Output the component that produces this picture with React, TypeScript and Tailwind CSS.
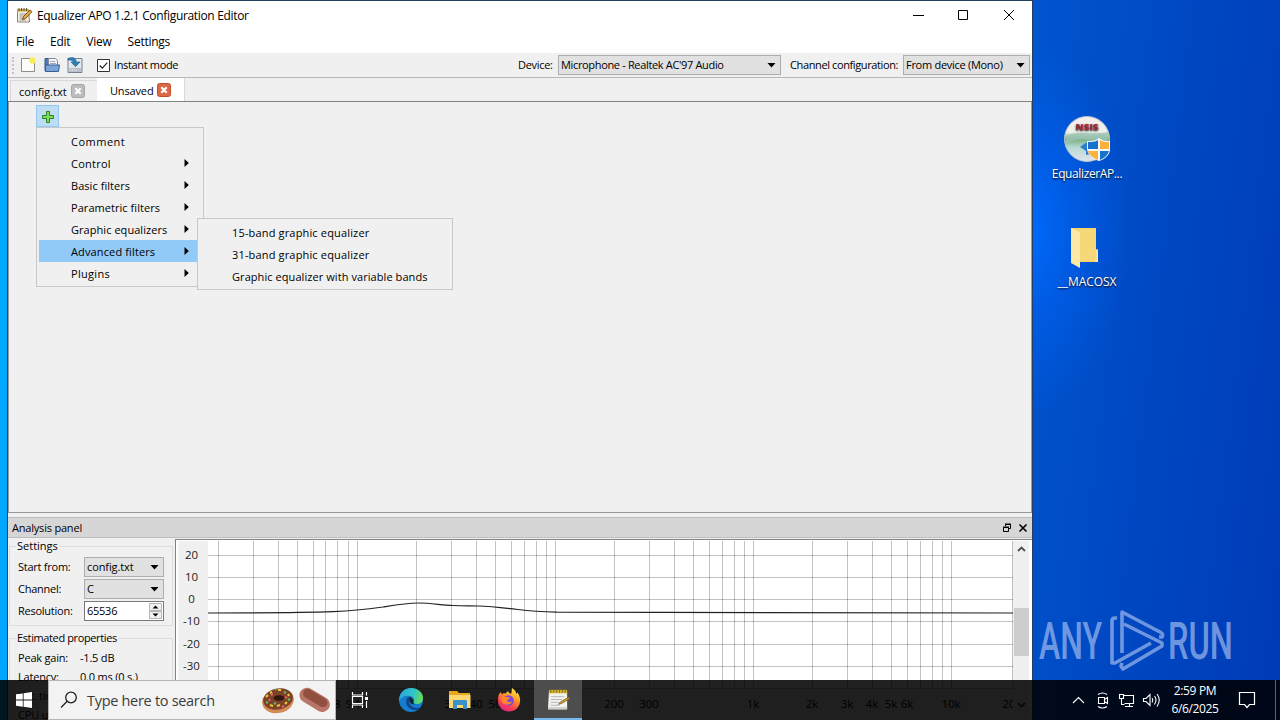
import type { ReactNode } from 'react'
import clsx from 'clsx'

const MENU_ITEMS = [
    { label: 'Comment', sub: false, track: 'tracking-[0.5px]' },
    { label: 'Control', sub: true, track: 'tracking-[0.25px]' },
    { label: 'Basic filters', sub: true, track: 'tracking-[0.05px]' },
    { label: 'Parametric filters', sub: true, track: 'tracking-[0.05px]' },
    { label: 'Graphic equalizers', sub: true, track: 'tracking-[0.05px]' },
    { label: 'Advanced filters', sub: true, track: 'tracking-[0.13px]' },
    { label: 'Plugins', sub: true, track: 'tracking-[0.3px]' },
]

const SUBMENU_ITEMS = [
    { label: '15-band graphic equalizer', track: 'tracking-[0.16px]' },
    { label: '31-band graphic equalizer', track: 'tracking-[0.16px]' },
    { label: 'Graphic equalizer with variable bands', track: 'tracking-[0.07px]' },
]

// Grid lines and labels use desktop coordinates; the svg viewBox does the shift
const GRID_X = [
    218, 253, 278, 297, 313, 325, 337, 348, 357,
    416, 451, 476, 495, 511, 524, 536, 546, 555,
    614, 649, 674, 693, 709, 722, 734, 744, 753,
    812, 847, 872, 891, 907, 920, 932, 942, 951, 1012,
]
const GRID_Y = [555, 577, 599, 621, 644, 666, 688]
const GAIN_LABELS = ['20', '10', '0', '-10', '-20', '-30']
const FREQ_LABELS: [number, string][] = [
    [337, '8'], [349, '9'], [361, '10'], [416, '20'], [451, '30'], [476, '40'], [495, '50'],
    [614, '200'], [649, '300'], [753, '1k'], [812, '2k'], [847, '3k'],
    [872, '4k'], [891, '5k'], [907, '6k'], [951, '10k'], [1012, '20k'],
]

function Triangle({ className }: { className?: string }) {
    return (
        <svg className={clsx('shrink-0', className)} width="9" height="5" viewBox="0 0 9 5">
            <path d="M0.5 0h8L4.5 4.6z" fill="#000" />
        </svg>
    )
}

function Combo({ className, children }: { className?: string; children: ReactNode }) {
    return (
        <div className={clsx('flex h-5 shrink-0 items-center justify-between border border-[#adadad] bg-[#e1e1e1] pl-[2px] pr-1', className)}>
            <span className="whitespace-nowrap pt-px">{children}</span>
            <Triangle />
        </div>
    )
}

function TabClose({ active }: { active?: boolean }) {
    return (
        <svg width="14" height="14" viewBox="0 0 14 14" className="shrink-0">
            <rect x="0.5" y="0.5" width="13" height="13" rx="2" fill={active ? '#dc6747' : '#bcbcbc'} stroke={active ? '#c2502f' : '#a5a5a5'} />
            <path d="M4.3 4.3l5.4 5.4M9.7 4.3L4.3 9.7" stroke="#fff" strokeWidth="2.2" />
        </svg>
    )
}

function NotepadIcon({ size }: { size: number }) {
    return (
        <svg width={size} height={size} viewBox="0 0 24 24" className="shrink-0">
            <path d="M2 4h19v18H1z" fill="#f3f1ec" />
            <path d="M1 20h20v2.6H1z" fill="#d0cdc6" />
            <path d="M2 2h19v3.5H2z" fill="#d9b52c" />
            <path d="M4 1v4M7 1v4M10 1v4M13 1v4M16 1v4M19 1v4" stroke="#7a6a22" strokeWidth="1" />
            <path d="M4 9h14M4 12h12M4 15h8M4 18h9" stroke="#b3b8c0" strokeWidth="1" />
            <path d="M12 17l2-2.500 9-5 1 1.300-8.500 5.200z" fill="#e0a534" stroke="#705018" strokeWidth="0.8" />
        </svg>
    )
}

function TitleBar() {
    return (
        <div className="flex h-[29px] shrink-0 items-center bg-white pl-2 pr-[17px] text-[12px]">
            <svg width="17" height="17" viewBox="0 0 17 17" className="shrink-0">
                <path d="M1.500 3.500h11l1 11.500H1.500z" fill="#f4eedd" stroke="#8d8678" />
                <path d="M1 2h12v2.500H1z" fill="#caa64a" />
                <path d="M3 1v3M5.500 1v3M8 1v3M10.500 1v3" stroke="#635433" />
                <path d="M3.500 7h7M3.500 9h6M3.500 11h4M3.500 13h6" stroke="#9b9a96" />
                <path d="M6.500 12.500l1-3L14 3l2 1.700-6.500 6.800z" fill="#e7aa48" stroke="#694516" strokeWidth="0.9" />
            </svg>
            <span className="ml-1 flex-1 tracking-[-0.33px]">Equalizer APO 1.2.1 Configuration Editor</span>
            <svg width="103" height="12" viewBox="0 0 103 12" fill="none" stroke="#000" strokeWidth="1" className="-mt-px">
                <path d="M1 6.500h11M46.500 1.500h9v9h-9zM92 1l10 10M102 1L92 11" />
            </svg>
        </div>
    )
}

function Toolbar() {
    return (
        <div className="flex h-[25px] shrink-0 items-center border-b border-[#b8b8b8] bg-[#f0f0f0] pl-1 pr-[2px]">
            <div className="mr-[6px] h-[17px] w-0 border-l-2 border-dotted border-[#c3c3c3]" />
            <svg width="16" height="16" viewBox="0 0 16 16" className="mr-2 shrink-0">
                <path d="M1.500 1.500h13v13h-13z" fill="#fcfcfa" stroke="#8e8e86" />
                <circle cx="12.500" cy="3.500" r="3.300" fill="#f8ed5a" />
            </svg>
            <svg width="16" height="16" viewBox="0 0 16 16" className="mr-[7px] shrink-0">
                <path d="M1 3V1.500h5l1 1.500v11H1z" fill="#537db2" stroke="#365a8b" />
                <path d="M4.500 1.500h7l2 2V9h-9z" fill="#f0f3f7" stroke="#7c8896" />
                <path d="M6 4.500h5M6 6.500h6" stroke="#a1aab5" />
                <path d="M1.500 8h14l-1 6.500h-13z" fill="#7aa5d8" stroke="#365f96" />
            </svg>
            <svg width="16" height="16" viewBox="0 0 16 16" className="shrink-0">
                <path d="M1 1.500h14v14H1z" fill="#e3e8ec" stroke="#75828f" />
                <path d="M2 11h12v4H2z" fill="#b9c2cb" />
                <path d="M3 13h8" stroke="#eef2f5" strokeDasharray="1 1" />
                <path d="M1 1.500c5-2 8-.5 8.300 3.500H13l-4.500 4.700L4 5h2.400C6.200 3.500 4 2.800 1 3z" fill="#2f7fb5" stroke="#1d5f90" strokeWidth="0.6" />
            </svg>
            <svg width="13" height="13" viewBox="0 0 13 13" className="ml-[14px] shrink-0">
                <path d="M.5.5h12v12H.5z" fill="#fff" stroke="#333" />
                <path d="M2.700 6.500l2.600 2.700 5-5.500" fill="none" stroke="#222" strokeWidth="1.200" />
            </svg>
            <span className="ml-1 flex-1 tracking-[-0.35px]">Instant mode</span>
            <span className="w-[40px] pt-px tracking-[-0.3px]">Device:</span>
            <Combo className="w-[223px] tracking-[-0.34px]">Microphone - Realtek AC'97 Audio</Combo>
            <span className="ml-[9px] w-[113px] whitespace-nowrap pt-px tracking-[-0.38px]">Channel configuration:</span>
            <Combo className="w-[127px] tracking-[-0.28px]">From device (Mono)</Combo>
        </div>
    )
}

function Tabs() {
    return (
        <div className="flex h-6 shrink-0 items-end border-b border-[#828282] bg-[#f0f0f0] pl-[2px]">
            <div className="flex h-[21px] w-[87px] items-center border-l border-t border-[#d9d9d9] pl-2">
                <span className="w-[52px] pt-[3px]">config.txt</span>
                <TabClose />
            </div>
            <div className="flex h-[23px] w-[88px] items-center border-r border-[#d9d9d9] bg-white pl-[13px]">
                <span className="w-[47px] pt-[3px] tracking-[-0.15px]">Unsaved</span>
                <TabClose active />
            </div>
        </div>
    )
}

function FilterMenu() {
    return (
        <div className="absolute left-[36px] top-[127px] w-[168px] border border-[#c8c8c8] bg-[#f0f0f0] p-[2px]">
            {MENU_ITEMS.map(item => (
                <div
                    key={item.label}
                    className={clsx(
                        'flex h-[22px] items-center justify-between pl-8 pr-[12px] pt-[3px]',
                        item.track,
                        item.label === 'Advanced filters' && 'bg-[#91c9f7]',
                    )}
                >
                    {item.label}
                    {item.sub && (
                        <svg width="5" height="8" viewBox="0 0 5 8" className="-mt-[3px]">
                            <path d="M0.500 0v8l4.300-4z" />
                        </svg>
                    )}
                </div>
            ))}
        </div>
    )
}

function FilterSubmenu() {
    return (
        <div className="absolute left-[197px] top-[218px] w-[256px] border border-[#c8c8c8] bg-[#f0f0f0] p-[2px]">
            {SUBMENU_ITEMS.map(item => (
                <div key={item.label} className={clsx('flex h-[22px] items-center pl-8 pt-[3px]', item.track)}>{item.label}</div>
            ))}
        </div>
    )
}

function AnalysisSettings() {
    return (
        <div className="-mt-px flex w-[167px] shrink-0 flex-col pl-px pr-[2px]">
            <fieldset className="h-[88px] border border-[#dcdcdc] pl-[8px]">
                <legend className="-ml-[2px] h-4 px-px leading-4">Settings</legend>
                <div className="mt-[3px] flex flex-col gap-[2px] tracking-[-0.25px]">
                    <div className="flex items-center"><span className="w-[66px] pt-px">Start from:</span><Combo className="w-20 tracking-[-0.1px]">config.txt</Combo></div>
                    <div className="flex items-center"><span className="w-[66px] pt-px">Channel:</span><Combo className="w-20">C</Combo></div>
                    <div className="flex items-center">
                        <span className="w-[66px] pt-px">Resolution:</span>
                        <div className="flex h-5 w-20 items-center justify-between border border-[#7a7a7a] bg-white pl-[2px] pr-px">
                            <span className="pt-px">65536</span>
                            <svg width="13" height="16" viewBox="0 0 13 16">
                                <path d="M.5.5h12v7H.5zM.5 8.500h12v7H.5z" fill="#f0f0f0" stroke="#b5b5b5" />
                                <path d="M3.500 5.500h6l-3-3zM3.500 10.500h6l-3 3z" />
                            </svg>
                        </div>
                    </div>
                </div>
            </fieldset>
            <fieldset className="mt-[4px] h-[110px] border border-[#dcdcdc] pl-[8px]">
                <legend className="-ml-[2px] h-4 px-px leading-4 tracking-[-0.38px]">Estimated properties</legend>
                <div className="mt-[2px] grid grid-cols-[62px_1fr] leading-[19px] tracking-[-0.2px]">
                    <span>Peak gain:</span><span>-1.5 dB</span>
                    <span>Latency:</span><span>0.0 ms (0 s.)</span>
                    <span>Init. time:</span><span>0.1 ms</span>
                    <span>CPU usage:</span><span>0.0 %</span>
                </div>
            </fieldset>
        </div>
    )
}

function ResponseGraph() {
    return (
        <div className="flex flex-1 border border-r-0 border-[#828282] bg-white pl-[2px] pt-px">
            <svg width="835" height="180" viewBox="178 541 835 180" className="shrink-0">
                <path d="M178 541h30v180h-30zM208 689h806v32H208z" fill="#f0f0f0" />
                <g fill="none" stroke="#000" strokeOpacity="0.24" shapeRendering="crispEdges">
                    {GRID_X.map(x => <path key={x} d={`M${x + 0.5} 540V689`} />)}
                    {GRID_Y.map(y => <path key={y} d={`M208 ${y + 0.5}H1014`} />)}
                </g>
                <path
                    d="M208 613C250 613 300 612.800 333 611.700C345 611.300 350 610.800 357 610C367 609 376 607.900 383 607C395 605 406 603 418 603C432 603 440 605 453 605.500C463 606 468 605.800 478 606C492 606.500 505 608 518 609.500C530 611 542 611.800 557 612.200C590 612.900 650 613 1014 613"
                    fill="none"
                    stroke="#222"
                    strokeWidth="1.200"
                />
                <g fontSize="11.500" fill="#222" textAnchor="middle">
                    {GAIN_LABELS.map((label, i) => <text key={label} x="191.500" y={GRID_Y[i] + 4}>{label}</text>)}
                    {FREQ_LABELS.map(([x, label]) => <text key={x} x={x} y="708" fill="#000">{label}</text>)}
                </g>
            </svg>
            <div className="flex w-4 shrink-0 flex-col items-center bg-[#f0f0f0]">
                <svg width="9" height="6" viewBox="0 0 9 6" className="mt-[5px]">
                    <path d="M1 5l3.500-3.500L8 5" fill="none" stroke="#505050" strokeWidth="1.800" />
                </svg>
                <div className="mt-[56px] h-12 w-[15px] bg-[#cdcdcd]" />
                <svg width="9" height="6" viewBox="0 0 9 6" className="mt-[46px]">
                    <path d="M1 1l3.500 3.500L8 1" fill="none" stroke="#333" strokeWidth="1.800" />
                </svg>
            </div>
        </div>
    )
}

function EditorWindow() {
    return (
        <div className="absolute left-[7px] top-0 flex h-[730px] w-[1026px] flex-col border border-[#24405f] bg-[#f0f0f0]">
            <TitleBar />
            <div className="flex h-[23px] shrink-0 items-center gap-[16px] bg-white pl-2 pt-px text-[12px] tracking-[-0.25px]">
                <span>File</span><span>Edit</span><span>View</span><span>Settings</span>
            </div>
            <Toolbar />
            <Tabs />
            <div className="h-[411px] shrink-0 border border-t-0 border-[#9a9a9a] pl-[27px] pt-[3px]">
                <div className="flex h-[22px] w-[23px] items-center justify-center border border-[#90c8f6] bg-[#c0dcf3] pt-px">
                    <svg width="13" height="13" viewBox="0 0 13 13">
                        <path d="M5.500 1.500h3v4h4v3h-4v4h-3v-4h-4v-3h4z" fill="#7fdc55" stroke="#27832b" />
                    </svg>
                </div>
            </div>
            <div className="mt-1 flex h-[21px] shrink-0 items-center border-y border-[#bdbdbd] bg-[#d6d6d6] pl-1 pr-[4px]">
                <span className="flex-1 pt-[2px] tracking-[-0.2px]">Analysis panel</span>
                <svg width="26" height="10" viewBox="0 0 26 10" fill="none" stroke="#000">
                    <path d="M3.500 3V1.500h5v4H7M1.500 4.500h5v4h-5zM1 4h6M3 1h6" />
                    <path d="M17.500 1.500l7 7M24.500 1.500l-7 7" strokeWidth="1.600" />
                </svg>
            </div>
            <div className="mt-px flex flex-1">
                <AnalysisSettings />
                <ResponseGraph />
            </div>
        </div>
    )
}

function DesktopIcons() {
    return (
        <div className="absolute left-[1047px] top-[114px] flex w-[80px] flex-col items-center text-[12px] leading-4 text-white [text-shadow:0_1px_2px_#000]">
            <svg width="48" height="48" viewBox="0 0 48 48">
                <defs>
                    <linearGradient id="disc" x1="0" y1="0" x2="0" y2="1">
                        <stop offset="0" stopColor="#f5eeee" />
                        <stop offset="0.35" stopColor="#eef0ea" />
                        <stop offset="0.5" stopColor="#76ad7c" />
                        <stop offset="0.68" stopColor="#b5d8d2" />
                        <stop offset="1" stopColor="#e2e5ec" />
                    </linearGradient>
                </defs>
                <circle cx="24" cy="25" r="22.500" fill="url(#disc)" stroke="#b7c4cc" />
                <path d="M3 22c12-7 22 0 42-4v8C30 30 20 20 3 30z" fill="#9cc3b4" opacity="0.8" />
                <text x="24" y="16" fontSize="9" fontWeight="900" fill="#a52b38" textAnchor="middle" textLength="23" lengthAdjust="spacingAndGlyphs">NSIS</text>
                <path d="M17 33l7-5 4 2v10l-5 1v-4z" fill="#2b7ed0" />
                <path d="M36 24c-4 3-7 3-12 3v8c1 6 6 10 12 12 6-2 11-6 11-12v-8c-5 0-7 0-11-3z" fill="#f5f8fb" />
                <path d="M35 26c-3 2-6 2-10 2v7h10z" fill="#1872c9" />
                <path d="M37 26c3 2 6 2 9 2v7h-9zM35 37v9c-5-2-9-5-10-9z" fill="#fcb13c" />
                <path d="M37 37v9c5-2 8-5 9-9z" fill="#1872c9" />
            </svg>
            <span className="mt-[4px] tracking-[-0.38px]">EqualizerAP...</span>
            <svg width="48" height="48" viewBox="0 0 48 48" className="mt-[42px]">
                <path d="M8 4h25v21l2 2v11H17z" fill="#f5d26d" />
                <path d="M17 5h16v32H17z" fill="#f7d879" />
                <path d="M8 4l9 4v36l-9-5z" fill="#fde9a4" />
                <path d="M33 27c1-3 2-2 2 0v11h-3z" fill="#ffe591" />
            </svg>
            <span className="mt-[2px] tracking-[-0.05px]">__MACOSX</span>
        </div>
    )
}

function Watermark() {
    return (
        <svg className="absolute left-[1036px] top-[606px] opacity-60" width="200" height="70" viewBox="1036 606 200 70">
            <g fontFamily="Roboto" fontWeight="500" fontSize="52" fill="#b8ccf5">
                <text x="1039" y="659" textLength="63" lengthAdjust="spacingAndGlyphs">ANY</text>
                <text x="1168" y="659" textLength="65" lengthAdjust="spacingAndGlyphs">RUN</text>
            </g>
            <g fill="none" stroke="#b8ccf5" strokeWidth="3.600" strokeLinejoin="round">
                <path d="M1117 618h-2q-3 0-3 3v42h3l36-20" />
                <path d="M1122 653v-41l38 20q4 2 2 5l-3 0" />
                <path d="M1124 624l38 19v3l-39 23-2-3 1-3" />
            </g>
        </svg>
    )
}

function SearchBox() {
    return (
        <div className="flex h-10 w-[288px] shrink-0 items-center border border-[#b6b6b6] bg-[#f3f3f3] pl-[11px] text-[14.5px] text-[#3c3c3c]">
            <svg width="18" height="18" viewBox="0 0 18 18" fill="none" stroke="#222" strokeWidth="1.300">
                <circle cx="11" cy="6.500" r="5.300" /><path d="M7.200 10.300L1 16.500" />
            </svg>
            <span className="ml-[9px] flex-1 pt-[2px] tracking-[-0.3px]">Type here to search</span>
            <svg width="70" height="30" viewBox="0 0 70 30" className="mr-[4px]">
                <ellipse cx="17" cy="16" rx="16" ry="12" fill="#d48a55" transform="rotate(-12 17 16)" />
                <ellipse cx="17" cy="14" rx="15" ry="10.500" fill="#7b4129" transform="rotate(-12 17 14)" />
                <ellipse cx="18" cy="13" rx="5.500" ry="2.800" fill="#32170f" />
                <path d="M5 12l2-2M9 20l3 1M16 21l3-1M24 19l2-2M28 11l-1-2M20 5l-3 0M11 7l-2 1" stroke="#eec83b" strokeWidth="2" />
                <path d="M5 17l2 1M13 18l2 1M23 7l2 1M27 15l2-1M14 5l1-1" stroke="#61bd65" strokeWidth="2" />
                <path d="M8 14l1 2M21 22l2-1M24 13l2-1M10 10l2-1" stroke="#e5655b" strokeWidth="2" />
                <rect x="37" y="7" width="33" height="15" rx="7.500" fill="#b97565" transform="rotate(31 53 15)" />
                <rect x="40" y="8" width="27" height="9" rx="4.500" fill="#91503f" transform="rotate(31 53 14)" />
            </svg>
        </div>
    )
}

function Taskbar() {
    return (
        <div className="absolute inset-x-0 bottom-0 flex h-10 items-center bg-black/87 text-white">
            <svg width="48" height="40" viewBox="0 0 48 40" className="shrink-0">
                <path d="M16 14.300l6.800-.9v6.200H16zM23.600 13.300L32 12v7.600h-8.400zM16 20.400h6.800v6.300l-6.800-.9zM23.600 20.400H32V28l-8.400-1.200z" fill="#fff" />
            </svg>
            <SearchBox />
            <svg width="18" height="18" viewBox="0 0 18 18" className="ml-[15px] shrink-0" fill="none" stroke="#fff" strokeWidth="1.200">
                <path d="M1.500 1v3h10V1M1.500 17v-3h10v3M1.500 5.500h10v7h-10zM15.500 1v3.500M15.500 10v7" />
                <path d="M14 6h3v3h-3z" fill="#fff" stroke="none" />
            </svg>
            <svg width="24" height="24" viewBox="0 0 24 24" className="ml-[30px] shrink-0">
                <defs>
                    <linearGradient id="edgeTop" x1="0" x2="1" y1="0.300" y2="0.500">
                        <stop offset="0" stopColor="#2ba5e3" /><stop offset="0.600" stopColor="#31c6c2" /><stop offset="1" stopColor="#69dc58" />
                    </linearGradient>
                </defs>
                <circle cx="12" cy="12" r="12" fill="#167dcc" />
                <path d="M0.300 10C1.500 4 6 0 12 0c7 0 12 4.500 12 10 0 4-3 6-6 6-2.500 0-4-1-3.500-2 2-3-0.500-6-4-6C6 7 2 9 0 13z" fill="url(#edgeTop)" />
                <path d="M8 10c-3 5 1 12 8 12 3 0 5-1 6.500-3-5 3-14-1-12-7 .5-1.500 1.500-2.500 2-3-1.500-.5-3.500-.3-4.500 1z" fill="#0c4793" />
                <path d="M11 9.500c2 0 4 2 3.500 4.500-.5 1 .5 2 1.500 2.200-4 1-7-3-5-6.700z" fill="#15262f" />
            </svg>
            <svg width="22" height="20" viewBox="0 0 22 20" className="ml-[26px] shrink-0">
                <path d="M0 1h8l2 2h11v4H0z" fill="#e8a721" />
                <path d="M0 5h21.500v13H0z" fill="#fcd970" />
                <path d="M4 11q0-1 1-1h12q1 0 1 1v8h-4v-4H8v4H4z" fill="#3d91cb" />
            </svg>
            <svg width="24" height="24" viewBox="0 0 24 24" className="ml-[26px] shrink-0">
                <defs>
                    <linearGradient id="fox" x1="0.800" x2="0.300" y1="0" y2="1">
                        <stop offset="0" stopColor="#fff04a" /><stop offset="0.400" stopColor="#ff9a27" /><stop offset="0.750" stopColor="#fb3e51" /><stop offset="1" stopColor="#df2388" />
                    </linearGradient>
                </defs>
                <path d="M1 12c0-4 1-6 2.500-8L5 6.500C6 5 7 5 8.500 5.500L11 3c1 2 2 2.500 3 3 1-2 .500-4 1-6 3 2 4 4 4.500 6l1-1.500c2 3 3 6 2.500 9C22.500 19.500 18 23.500 12 23.500S1 19 1 12z" fill="url(#fox)" />
                <circle cx="11.500" cy="12.500" r="5.300" fill="#7a48d8" />
                <path d="M4.500 9c3-1.500 5 .5 9 .5-1 2-3 1.500-3.500 3.500 1.500 2 4 1 5 0 0 4-8 6-10.500 0z" fill="#ff8533" />
            </svg>
            <div className="ml-[13px] flex h-10 w-12 shrink-0 items-center justify-center border-b-2 border-[#76b9ed] bg-[#4d4d4d]">
                <NotepadIcon size={23} />
            </div>
            <div className="flex-1" />
            <svg width="90" height="20" viewBox="0 0 90 20" className="shrink-0" fill="none" stroke="#fff" strokeWidth="1.100">
                <path d="M1 13l5.500-5.500L12 13" />
                <path d="M26.500 7.500h6v6h-6zM32.500 9.500l3-2v6l-3-2M26 4.500q4.500-3 9 0M26 16.500q4.500 3 9 0" />
                <path d="M51.500 5.500h10v8h-9M57.500 13.500v3M53 16.500h8M47.500 4.500h4v4h-4zM49.500 8.500v6h3" />
                <path d="M71.500 8.500h2.500l4-4v11l-4-4h-2.500zM80 8q1.500 2 0 4.500M82.500 6q3 4 0 8.500M85 4q4.500 6 0 12.500" />
            </svg>
            <div className="ml-px w-[64px] text-center text-[12px] leading-[18px] tracking-[-0.35px]">
                <div>2:59 PM</div>
                <div>6/6/2025</div>
            </div>
            <svg width="18" height="18" viewBox="0 0 18 18" className="ml-[11px] shrink-0" fill="none" stroke="#fff" strokeWidth="1.200">
                <path d="M1.500 1.500h15v12h-5L9 16.500l-2.500-3h-5z" />
            </svg>
            <div className="ml-[19px] mr-1 h-10 w-px bg-[#586278]" />
        </div>
    )
}

export default function App() {
    return (
        <div className="relative h-[720px] w-[1280px] overflow-hidden bg-[radial-gradient(ellipse_110px_190px_at_1020px_230px,#006cff_0%,#0062f2a0_45%,transparent_100%),linear-gradient(97deg,#00aaff_0%,#00aaff_3%,#0052cc_78%,#003ab6_100%)] font-['Open_Sans',sans-serif] text-[11px] text-black">
            <DesktopIcons />
            <Watermark />
            <EditorWindow />
            <FilterMenu />
            <FilterSubmenu />
            <Taskbar />
        </div>
    )
}
